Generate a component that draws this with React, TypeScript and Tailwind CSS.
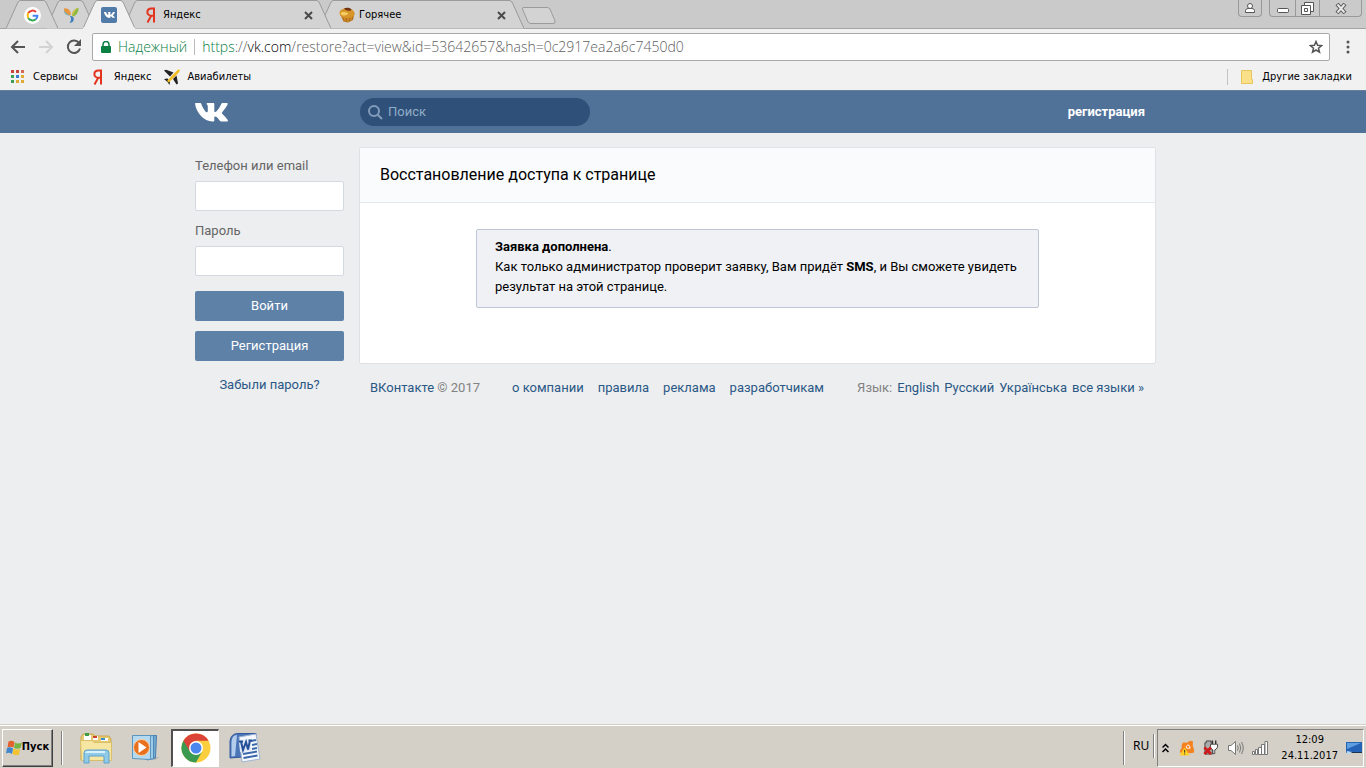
import type { ReactNode } from 'react';

const uiFont = 'font-["DejaVu_Sans_Condensed","Noto_Sans",sans-serif]';

interface TabProps {
    width: number;
    title?: string;
    icon: ReactNode;
    active?: boolean;
    className: string;
}

function Tab({ width, title, icon, active, className }: TabProps) {
    return (
        <div className={`relative -ml-3 flex h-7 shrink-0 items-center ${className}`} style={{ width }}>
            <svg className="absolute inset-0" width={width} height="29" fill="none">
                <path
                    d={`M0 28.5L12 2L14 .5H${width - 14}L${width - 12} 2L${width} 28.5`}
                    fill={active ? '#f2f1f2' : '#d3d3d3'}
                    stroke="#9b9b9b"
                />
                {active && <path d={`M0 28.5H${width}`} stroke="#f2f1f2" strokeWidth="2" />}
            </svg>
            <div className={`relative flex w-full items-center pt-0.5 ${title ? 'gap-1 pr-4 pl-5' : 'justify-center'}`}>
                {icon}
                {title && (
                    <>
                        <span className="flex-1 text-[11px] leading-4 text-black">{title}</span>
                        <button aria-label="Закрыть вкладку" className="p-0.5">
                            <svg width="9" height="9" stroke="#4a4a4a" strokeWidth="2">
                                <path d="M1 1l7 7M8 1l-7 7" />
                            </svg>
                        </button>
                    </>
                )}
            </div>
        </div>
    );
}

function GoogleIcon() {
    return (
        <svg width="17" height="17" viewBox="0 0 17 17" fill="none" strokeWidth="2">
            <circle cx="8.5" cy="8.5" r="8.5" fill="#fff" />
            <path d="M12 5A5 5 0 0 0 4.2 6.1" stroke="#e94335" />
            <path d="M4.2 6.1a5 5 0 0 0 0 4.8" stroke="#fabb05" />
            <path d="M4.2 10.9A5 5 0 0 0 11.8 12.2" stroke="#34a853" />
            <path d="M11.8 12.2A5 5 0 0 0 13.4 8.7H8.7" stroke="#4285f4" />
        </svg>
    );
}

function PetalsIcon() {
    return (
        <svg width="16" height="16" viewBox="0 0 16 16">
            <path d="M1 1.500C5 .500 8.500 4 7.500 8.500 3.500 8 .500 5 1 1.500z" fill="#e9953c" />
            <path d="M1 3C2 5.500 4.500 7.500 7.500 8.500 4 9 .500 7 1 3z" fill="#7fb0b0" />
            <path d="M15.500 1C16 5 13 9 9.500 9.500 8.500 5 11 1.500 15.500 1z" fill="#8cb93f" />
            <path d="M15.500 1C13 2 11 5 9.500 9.500 8.500 5 11 1.500 15.500 1z" fill="#d3c24a" />
            <path d="M7 9C10 9 11.500 11 10.500 13.500 10 15 8.500 16 6.500 16 8.500 14 8.500 11 7 9z" fill="#3f7fc0" />
        </svg>
    );
}

function VkMark({ width, height }: { width: number; height: number }) {
    return (
        <svg width={width} height={height} viewBox="0 0 33 19" preserveAspectRatio="none">
            <path
                fill="#fff"
                d="M0 .6C0 .2.300 0 .800 0H5c.700 0 1 .300 1.300 1 1.800 4.600 4.300 8.300 5.700 8.300.600 0 .800-.400.800-1.700V3.500c0-1.800-.900-2-1.200-2.600C11.400.400 11.900 0 12.500 0H18.300c.800 0 1 .400 1 1.200V8c0 .700.300 1 .600 1 .600 0 1.200-.400 2.400-1.600 2-2.200 3.700-6 3.700-6 .300-.700.800-1.400 1.500-1.400h4.200c1 0 1.100.600.900 1.300-.500 2-5.400 8-5.400 8-.500.600-.500.900 0 1.500 1.700 2 4.400 4 5.500 6.300.400.900 0 1.500-1.100 1.500h-4.800c-.900 0-1.500-.400-2.400-1.400-1.600-1.900-2.900-3.600-4.200-3.600-.600 0-.900.300-.900 1.400v2.500c0 .800-.300 1.100-1.500 1.100C9.500 19 1.200 10 0 .600z"
            />
        </svg>
    );
}

function VkFavicon() {
    return (
        <span className="flex size-4 items-center justify-center rounded-xs bg-[#507aa8]">
            <VkMark width={11} height={6} />
        </span>
    );
}

function YandexIcon() {
    return (
        <svg width="16" height="16" viewBox="0 0 16 16" fill="none" stroke="#e3341f" strokeWidth="2">
            <path d="M11 .500V15.500M11 1.500H8.500C3 1.500 3 8.800 8.500 8.800H11M8.200 8.800L4.500 15.500" />
        </svg>
    );
}

function MuffinIcon() {
    return (
        <svg width="16" height="16" viewBox="0 0 16 16">
            <path d="M1.500 8L4.500 14.500 9 15.500 14 13 15.500 6z" fill="#b5701a" />
            <path d="M5 10.500L6.500 14M9 11V15M12 10L12 13" stroke="#d99a35" />
            <path d="M.5 6C.500 3 4 1 8 1.500 13 1.500 16 4 15.500 7.500 15 10 11 11.500 7.500 11 3.500 11 .500 9 .500 6z" fill="#d8952a" />
            <path d="M1.500 6.500C2 4.500 6 4.500 9 6 9.500 8.500 3 10 1.500 6.500z" fill="#f5cd63" />
            <path d="M5 1.500C7 0 11.500 .500 12.500 2.500 12 4.500 6.500 4 5 1.500z" fill="#71320e" />
        </svg>
    );
}

function AppsIcon() {
    const colors = ['#c9453b', '#c9453b', '#d26a51', '#3f9d56', '#3b7ad0', '#e0ab34', '#3f9d56', '#e0ab34', '#e0ab34'];
    return (
        <svg width="14" height="14">
            {colors.map((c, i) => (
                <rect key={i} x={(i % 3) * 5} y={Math.floor(i / 3) * 5} width="3" height="3" fill={c} />
            ))}
        </svg>
    );
}

function PlaneIcon() {
    return (
        <svg width="16" height="16" viewBox="0 0 16 16">
            <path d="M0 1.500L2 .700 9.500 3.500 6 7.500z" fill="#222" />
            <path d="M12.500 6.500L9 10l3.500 5.500 1.500-1z" fill="#222" />
            <path d="M0 10l3.500-.500 2.500 3-.500 3.500-2-3z" fill="#222" />
            <path d="M3 12L12.500 2C14 .500 16 0 15.800 1.500 15.500 3 14 4.500 4.800 13.500z" fill="#f3bd22" />
        </svg>
    );
}

function Chrome() {
    return (
        <header className={`shrink-0 ${uiFont}`}>
            <div className="flex h-7 justify-between bg-[#cacaca]">
                <div className="flex pl-[18px]">
                    <Tab width={52} icon={<GoogleIcon />} className="z-10" />
                    <Tab width={49} icon={<PetalsIcon />} className="z-0" />
                    <Tab width={52} icon={<VkFavicon />} active className="z-20" />
                    <Tab width={208} icon={<YandexIcon />} title="Яндекс" className="z-10" />
                    <Tab width={205} icon={<MuffinIcon />} title="Горячее" className="z-0" />
                    <button aria-label="Новая вкладка" className="-ml-0.5 self-center pt-0.5">
                        <svg width="35" height="17" fill="#d3d3d3" stroke="#9b9b9b">
                            <path d="M.500 2Q0 .500 2 .500H25Q27 .500 28 2L33 14Q34 16.500 31 16.500H9Q7 16.500 6 15z" />
                        </svg>
                    </button>
                </div>
                <div className="flex h-[17px] gap-[7px] pr-1">
                    <button aria-label="Пользователь" className="flex w-6 items-center justify-center rounded-b-sm border border-t-0 border-[#999]">
                        <svg width="12" height="12" fill="#fff" stroke="#555">
                            <path d="M1.500 10.500V8.500Q2 6.500 4 6.500H8Q10 6.500 10.500 8.500V10.500z" />
                            <circle cx="6" cy="4" r="2.500" />
                        </svg>
                    </button>
                    <div className="flex rounded-b-sm border border-t-0 border-[#999]">
                        <button aria-label="Свернуть" className="flex w-[25px] items-center justify-center pt-1">
                            <svg width="12" height="5" fill="#fff" stroke="#555">
                                <rect x=".500" y=".500" width="11" height="4" rx="1" />
                            </svg>
                        </button>
                        <button aria-label="Развернуть" className="flex w-[25px] items-center justify-center border-x border-[#999]">
                            <svg width="13" height="13" fill="#fff" stroke="#555">
                                <path d="M3.500 .500h9v9h-9z" />
                                <path d="M.500 3.500h9v9h-9z" />
                                <path d="M3.500 6.500h3v3h-3z" />
                            </svg>
                        </button>
                        <button aria-label="Закрыть" className="flex w-[41px] items-center justify-center">
                            <svg width="12" height="11" fill="none">
                                <path d="M2 1l8 9M10 1l-8 9" stroke="#555" strokeWidth="4" />
                                <path d="M2.500 1.500l7 8M9.500 1.500l-7 8" stroke="#e8e8e8" strokeWidth="2" />
                            </svg>
                        </button>
                    </div>
                </div>
            </div>

            <div className="border-t border-b border-t-[#a3a3a3] border-b-[#6a7f99] bg-[#f2f1f2]">
                <div className="flex h-9 items-center pr-4 pl-2.5">
                    <button aria-label="Назад" className="w-7">
                        <svg width="16" height="14" fill="none" stroke="#555" strokeWidth="2">
                            <path d="M15 7H2M8 1L2 7l6 6" />
                        </svg>
                    </button>
                    <button aria-label="Вперёд" className="w-7">
                        <svg width="16" height="14" fill="none" stroke="#d3d3d3" strokeWidth="2">
                            <path d="M1 7h13M8 1l6 6-6 6" />
                        </svg>
                    </button>
                    <button aria-label="Обновить" className="w-[26px]">
                        <svg width="16" height="16" fill="none">
                            <path d="M13 4A6.200 6.200 0 1 0 14 9.500" stroke="#555" strokeWidth="2" />
                            <path d="M15 0v7H8z" fill="#555" />
                        </svg>
                    </button>
                    <div className='flex h-7 flex-1 items-center rounded-xs border border-[#a9a9a9] bg-white px-2 font-["Open_Sans","Noto_Sans",sans-serif] text-sm font-light'>
                        <svg width="10" height="12" fill="none">
                            <rect y="5" width="10" height="7" rx="1" fill="#0b8043" />
                            <path d="M2 5V3.500a3 3 0 0 1 6 0V5" stroke="#0b8043" strokeWidth="1.500" />
                        </svg>
                        <span className="mx-[7px] text-[#0b8043]">Надежный</span>
                        <span className="h-4 w-px bg-[#bbb]" />
                        <span className="ml-[7px] flex-1 text-[#606060]">
                            <span className="text-[#0b8043]">https</span>://<span className="text-black">vk.com</span>
                            /restore?act=view&amp;id=53642657&amp;hash=0c2917ea2a6c7450d0
                        </span>
                        <button aria-label="Добавить в закладки" className="-mr-0.5">
                            <svg width="14" height="14" viewBox="0 0 14 14" fill="none" stroke="#555" strokeWidth="1.500">
                                <path d="M7 1.500l1.600 3.800 4 .300-3.100 2.600 1 4L7 10l-3.500 2.200 1-4L1.400 5.600l4-.300z" />
                            </svg>
                        </button>
                    </div>
                    <button aria-label="Меню" className="ml-4">
                        <svg width="4" height="14" fill="#555">
                            <circle cx="2" cy="2" r="1.500" />
                            <circle cx="2" cy="7" r="1.500" />
                            <circle cx="2" cy="12" r="1.500" />
                        </svg>
                    </button>
                </div>
                <nav className="flex h-[25px] items-center justify-between pr-3.5 pb-0.5 pl-[11px] text-[11px] leading-4 text-black">
                    <div className="flex items-center gap-3">
                        <a href="#" className="flex items-center gap-2">
                            <AppsIcon />
                            Сервисы
                        </a>
                        <a href="#" className="flex items-center gap-2">
                            <YandexIcon />
                            Яндекс
                        </a>
                        <a href="#" className="flex items-center gap-2">
                            <PlaneIcon />
                            Авиабилеты
                        </a>
                    </div>
                    <div className="flex items-center gap-3">
                        <span className="h-4 w-px bg-[#c3c3c3]" />
                        <a href="#" className="flex items-center gap-2">
                            <svg width="14" height="14">
                                <path d="M1.500 .500h10v9h1v4h-11z" fill="#fbe08a" stroke="#e6c65c" />
                            </svg>
                            Другие закладки
                        </a>
                    </div>
                </nav>
            </div>
        </header>
    );
}

function TopBar() {
    return (
        <div className="bg-[#507299]">
            <div className="mx-auto flex h-[42px] max-w-[976px] items-center pr-4">
                <a href="#" aria-label="ВКонтакте" className="w-[165px]">
                    <VkMark width={33} height={19} />
                </a>
                <label className="flex h-7 w-[230px] items-center gap-[5px] rounded-full bg-[#2f5078] pl-2">
                    <svg width="15" height="15" className="shrink-0" fill="none" stroke="#839cbb" strokeWidth="2">
                        <circle cx="6" cy="6" r="5" />
                        <path d="M9.500 9.500l4.500 4.500" />
                    </svg>
                    <input
                        type="text"
                        aria-label="Поиск"
                        placeholder="Поиск"
                        className="w-full bg-transparent outline-none placeholder:text-[#8fadc8]"
                    />
                </label>
                <a href="#" className="mr-2.5 ml-auto font-bold text-white">
                    регистрация
                </a>
            </div>
        </div>
    );
}

const inputStyle = 'mt-1.5 mb-2.5 block h-[30px] w-full rounded-xs border border-[#d3d9de] bg-white px-2 outline-none';
const buttonStyle = 'mb-2.5 block h-[30px] w-full rounded-xs bg-[#5e81a8] text-white';

function LoginForm() {
    return (
        <form className="w-[149px] shrink-0 pt-[9px]">
            <label htmlFor="login" className="block leading-[19px] text-[#656565]">
                Телефон или email
            </label>
            <input id="login" type="text" className={inputStyle} />
            <label htmlFor="password" className="block leading-[19px] text-[#656565]">
                Пароль
            </label>
            <input id="password" type="password" className={inputStyle} />
            <div className="pt-[5px]">
                <button type="button" className={buttonStyle}>
                    Войти
                </button>
                <button type="button" className={buttonStyle}>
                    Регистрация
                </button>
            </div>
            <a href="#" className="block pt-1 text-center text-[#2a5885]">
                Забыли пароль?
            </a>
        </form>
    );
}

const footerLinks = ['о компании', 'правила', 'реклама', 'разработчикам'];
const languages = ['English', 'Русский', 'Українська', 'все языки »'];

function Content() {
    return (
        <div className="min-w-0 flex-1">
            <main className="rounded-xs border border-[#dfe1e4] bg-white pb-[55px]">
                <h1 className="border-b border-[#e7e8ec] bg-[#fafbfc] px-5 py-[15px] text-base leading-6 text-black">
                    Восстановление доступа к странице
                </h1>
                <div className="mx-auto mt-[26px] w-[563px] rounded-xs border border-[#bfc7d6] bg-[#f0f1f5] px-[18px] pt-[7px] pb-2.5 leading-5 text-black">
                    <b>Заявка дополнена</b>.
                    <br />
                    Как только администратор проверит заявку, Вам придёт <b>SMS</b>, и Вы сможете увидеть
                    <br />
                    результат на этой странице.
                </div>
            </main>
            <footer className="flex justify-between pt-4 pr-3 pl-[11px] leading-4 text-[#2a5885]">
                <div className="flex gap-8">
                    <span className="text-[#828282]">
                        <a href="#" className="text-[#2a5885]">
                            ВКонтакте
                        </a>{' '}
                        © 2017
                    </span>
                    <nav className="flex gap-3.5">
                        {footerLinks.map((link) => (
                            <a key={link} href="#">
                                {link}
                            </a>
                        ))}
                    </nav>
                </div>
                <div className="flex gap-[5px]">
                    <span className="text-[#828282]">Язык:</span>
                    {languages.map((lang) => (
                        <a key={lang} href="#">
                            {lang}
                        </a>
                    ))}
                </div>
            </footer>
        </div>
    );
}

function WindowsFlag() {
    return (
        <svg width="16" height="16" viewBox="0 0 16 16">
            <path d="M2.500 1.500Q5.500 0 8.500 2L7.500 7.500Q4.500 6 1.500 7.500z" fill="#e3612c" />
            <path d="M9 2.500Q12 4.500 16 2.500L14.500 8Q11 9.500 8 8z" fill="#76b543" />
            <path d="M1 8Q4 6.500 7 8.500L6 14Q3 12 0 13.500z" fill="#3f86cf" />
            <path d="M7.500 8.500Q10.500 10.500 14 9L13 14.500Q9.500 16 6.500 14z" fill="#f4c22f" />
        </svg>
    );
}

function ExplorerIcon() {
    return (
        <svg width="34" height="32" viewBox="0 0 34 32">
            <path d="M2 5L4 2H14L16 4H30L32 7V28H2z" fill="#e8ca72" stroke="#c9a94f" />
            <path d="M5 3H12V8H5z" fill="#fff" />
            <path d="M6 1H10V4H6z" fill="#3d9c45" />
            <path d="M14 4H19V8H14z" fill="#fff" />
            <path d="M14 4H18V6H14z" fill="#c8432d" />
            <path d="M22 6H29V9H22z" fill="#fff" />
            <path d="M22 6H26V8H22z" fill="#3c8bd0" />
            <path d="M1.500 8.500H13L15 10.500H32.500V28.500H2.500z" fill="#f7e5a2" stroke="#d9bf6c" />
            <path d="M5 31V21Q5 18 8 18H27Q30 18 30 21V31H25V24H10V31z" fill="#8fcbe8" stroke="#5ba1cb" />
            <path d="M7 21Q7 20 9 20H26" stroke="#d8f1fb" strokeWidth="2" fill="none" />
        </svg>
    );
}

function PlayerIcon() {
    return (
        <svg width="30" height="28" viewBox="0 0 30 28">
            <path d="M20 24L29 23 24 26z" fill="#b9b6b0" />
            <path d="M16 1.500L25.500 1.500 24.500 24 16 26z" fill="#74a9d1" stroke="#4780ae" />
            <path d="M14 2.500L22.500 1.500V25L14 25z" fill="#9dcbe8" stroke="#4e88b5" />
            <path d="M1.500 1.500H19.500V25.500L1.500 24.500z" fill="#b5d9ef" stroke="#5c95bf" />
            <circle cx="10.500" cy="13.500" r="8" fill="#e9701d" stroke="#fbd3a8" />
            <path d="M7.500 8L15.500 13.500 7.500 19z" fill="#fff" />
        </svg>
    );
}

function ChromeIcon() {
    return (
        <svg width="30" height="30" viewBox="0 0 30 30">
            <circle cx="15" cy="15" r="14.500" fill="#fbce3d" />
            <path d="M15 15L2.440 7.750A14.500 14.500 0 0 0 15 29.500L21.100 18.500z" fill="#3a9b50" />
            <path d="M2.440 7.750A14.500 14.500 0 0 1 27.560 7.750H15L8.900 18.500z" fill="#dc4437" />
            <circle cx="15" cy="15" r="7" fill="#fff" />
            <circle cx="15" cy="15" r="5.500" fill="#4a86ee" />
        </svg>
    );
}

function WordIcon() {
    return (
        <svg width="32" height="32" viewBox="0 0 32 32">
            <path d="M1 9Q2 1.500 9 1.500H27V24L1 26z" fill="#4a76b8" stroke="#34599a" />
            <path d="M2.500 10Q3 3 8 3L6 24 2.500 24.500z" fill="#b5cdec" />
            <path d="M10 5L27 2 31 27 13 30z" fill="#f5f8fc" stroke="#9db4d3" />
            <path d="M22 9l5-1M23 13l5-1M23 17l5-1M14 22l14-2.500M14.500 26l14-2.500" stroke="#3c68ac" strokeWidth="2" />
            <path d="M10 8L21 7 22 19 11 20z" fill="#dfe9f6" />
            <path d="M10 9.500H14M12 9.500l2 8.500 3-8 2 7.500 2-9M19.500 8.500H23" stroke="#254f98" strokeWidth="2" fill="none" />
        </svg>
    );
}

function TrayIcons() {
    return (
        <div className="flex items-center gap-2">
            <svg width="7" height="10" className="mr-0.5" fill="none" stroke="#000" strokeWidth="1.500">
                <path d="M.500 4.500l3-3 3 3M.500 9l3-3 3 3" />
            </svg>
            <svg width="16" height="17" viewBox="0 0 17 17">
                <path d="M5 3Q8 4 10 2.500 13 0 15 2.500 14 5 15 8 17 12 15.500 14 12 15 9 14 4 16 1.500 14 0 12 3 9 2 5 5 3z" fill="#f58220" />
                <path d="M11.500 10V7.500Q11 5.500 9 6 7 7 8 9 10 10.500 11.500 8" fill="none" stroke="#fff" />
                <path d="M6 8.500L11.500 17H.500z" fill="#fdd028" />
                <path d="M6 11v3M6 15v1" stroke="#222" />
            </svg>
            <svg width="16" height="17" viewBox="0 0 17 17">
                <path d="M3.500 1.500H8.500V3.500H10V15.500H2V3.500H3.500z" fill="#aaa" stroke="#444" />
                <path d="M10 1v4M13.500 1v4" stroke="#333" strokeWidth="1.500" />
                <path d="M8 5H15.500V8Q14 11 12.500 11V15H10.500V11Q8 10 8 8z" fill="#fff" stroke="#444" />
                <path d="M1.500 8.500l7 7M8.500 8.500l-7 7" stroke="#ce1c1c" strokeWidth="3" />
            </svg>
            <svg width="17" height="16" viewBox="0 0 17 16" fill="none" stroke="#777">
                <path d="M1.500 5.500H4L8.500 1.500V14.500L4 10.500H1.500z" fill="#fff" />
                <path d="M10.500 5.500Q12 8 10.500 10.500M12.500 3.500Q15 8 12.500 12.500M14.500 2Q18 8 14.500 14" />
            </svg>
            <svg width="17" height="14" viewBox="0 0 17 14" fill="#fff" stroke="#777">
                <path d="M.500 10.500h2v3h-2zM3.500 8.500h2v5h-2zM6.500 6.500h3v7h-3zM9.500 3.500h3v10h-3zM13 .500h2.500v13h-2.500z" />
            </svg>
        </div>
    );
}

function Divider() {
    return <span className="h-[34px] w-0.5 border-r border-l border-r-white border-l-[#808080]" />;
}

function Taskbar() {
    return (
        <div className={`flex h-11 shrink-0 items-center border-t border-[#d4d0c8] bg-[#d4d0c8] pt-0.5 pr-0.5 pl-0.5 shadow-[inset_0_1px_#fff] ${uiFont}`}>
            <button className="flex h-[38px] w-[51px] items-center justify-center border border-t-white border-r-[#404040] border-b-[#404040] border-l-white text-[11px] font-bold text-black shadow-[inset_-1px_-1px_#808080]">
                <WindowsFlag />
                Пуск
            </button>
            <div className="ml-2 flex flex-1 items-center">
                <Divider />
                <div className="ml-4 flex items-center">
                    <button aria-label="Проводник" className="w-[52px]">
                        <ExplorerIcon />
                    </button>
                    <button aria-label="Проигрыватель" className="w-10">
                        <PlayerIcon />
                    </button>
                    <button
                        aria-label="Google Chrome"
                        className="flex h-[38px] w-12 items-center justify-center border-t-2 border-r border-b border-l-2 border-t-[#505050] border-r-white border-b-white border-l-[#505050] bg-white"
                    >
                        <ChromeIcon />
                    </button>
                    <button aria-label="Word" className="ml-2.5">
                        <WordIcon />
                    </button>
                </div>
            </div>
            <Divider />
            <div className="flex items-center gap-1 pr-0.5 pb-1 pl-2 text-black">
                <span className='font-["Noto_Sans",sans-serif] text-xs'>RU</span>
                <span className="h-6 w-0.5 border-r border-l border-r-white border-l-[#808080]" />
            </div>
            <div className="flex h-[38px] items-center gap-3 border border-t-[#808080] border-r-white border-b-white border-l-[#808080] pr-px pl-1">
                <TrayIcons />
                <div className="text-center text-[11px] leading-4 text-black">
                    12:09
                    <br />
                    24.11.2017
                </div>
                <svg width="16" height="14" className="-ml-1">
                    <path d="M0 1H16V11H0z" fill="#2463b5" />
                    <path d="M1 2H15L1 8z" fill="#5e9fe0" />
                    <path d="M0 11h16v1H0z" fill="#1c3550" />
                    <path d="M1 10l5 1-2 2H0z" fill="#b9d8ee" />
                </svg>
            </div>
        </div>
    );
}

export default function App() {
    return (
        <div className="flex min-h-screen flex-col bg-[#edeef0]">
            <Chrome />
            <div className="flex-1 font-[Roboto,sans-serif] text-[13px]">
                <TopBar />
                <div className="mx-auto flex max-w-[976px] gap-[15px] pt-3.5 pr-[15px]">
                    <LoginForm />
                    <Content />
                </div>
            </div>
            <Taskbar />
        </div>
    );
}
